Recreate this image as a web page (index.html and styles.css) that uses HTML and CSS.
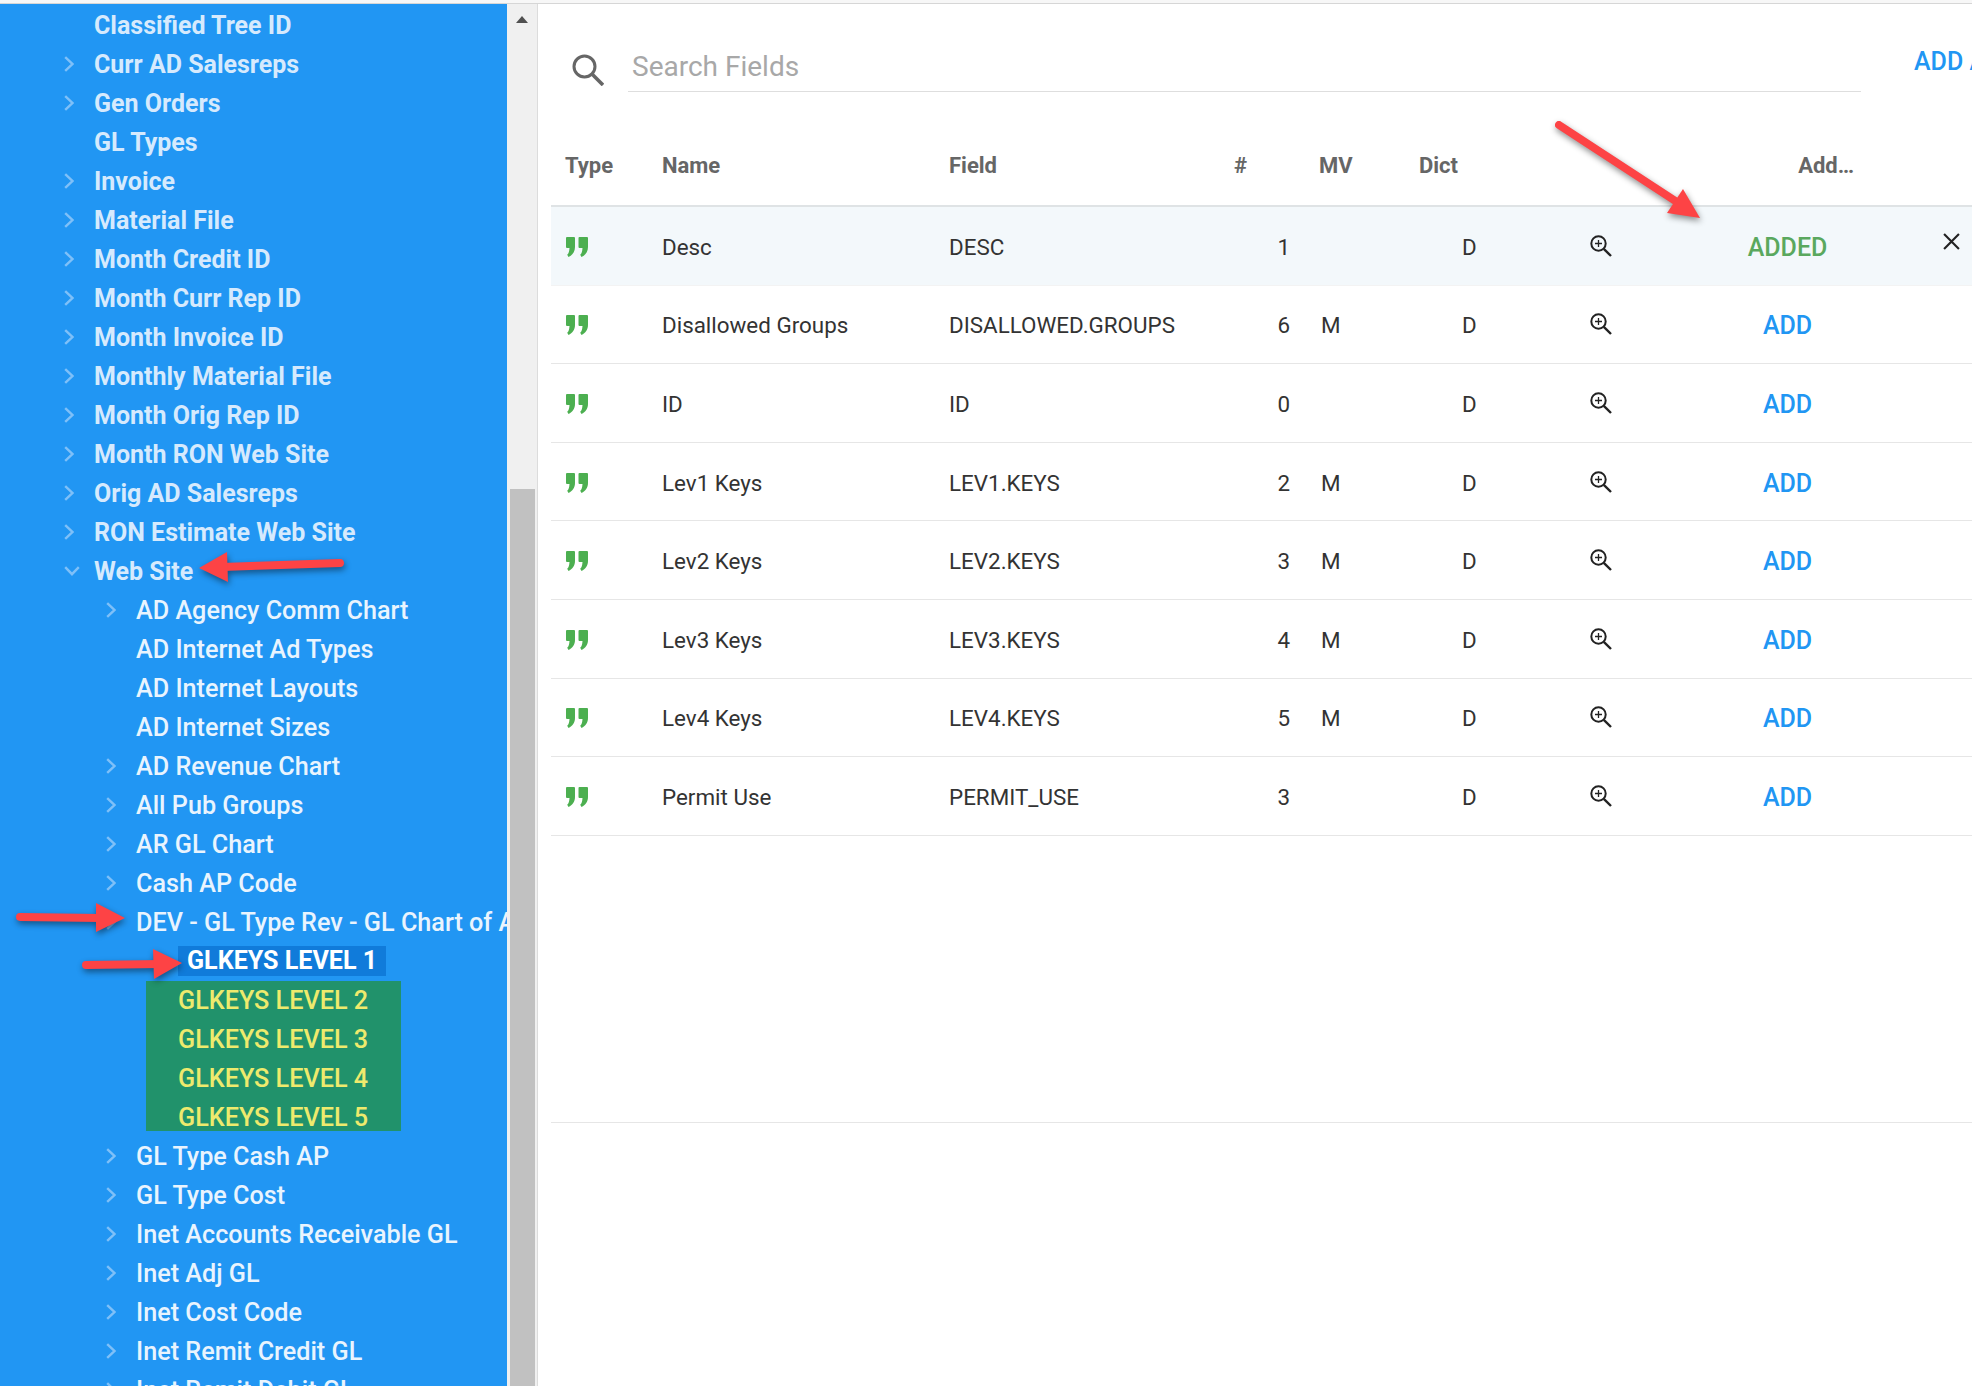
FILE: index.html
```html
<!DOCTYPE html>
<html lang="en">
<head>
    <meta charset="UTF-8">
    <title>Dictionary Fields</title>
    <link rel="stylesheet" href="styles.css">
</head>
<body>

<svg class="iconDefs" width="0" height="0">
    <symbol id="chevRight" viewBox="0 0 10 16"><path d="M1.2 1.2 8.400 8 1.2 14.800" fill="none" stroke="currentColor" stroke-width="2.400"/></symbol>
    <symbol id="chevDown" viewBox="0 0 16 10"><path d="M1.2 1.2 8 8.200 14.800 1.2" fill="none" stroke="currentColor" stroke-width="2.400"/></symbol>
    <symbol id="quote" viewBox="0 0 22 20"><path d="M1 0h7a1 1 0 0 1 1 1v9c0 4.500-2.500 8.300-6.500 10L1.200 17.800c1.500-1.300 2-3 2.300-6.800H1a1 1 0 0 1-1-1V1a1 1 0 0 1 1-1zM13.500 0h7.500a1 1 0 0 1 1 1v9c0 4.500-2.500 8.300-6.500 10l-1.300-2.200c1.500-1.300 2-3 2.300-6.800h-3a1 1 0 0 1-1-1V1a1 1 0 0 1 1-1z" fill="currentColor"/></symbol>
    <symbol id="zoomIn" viewBox="0 0 22 22"><circle cx="8.500" cy="8.500" r="7.200" fill="none" stroke="currentColor" stroke-width="2"/><path d="M13.800 13.800 21 21" fill="none" stroke="currentColor" stroke-width="2.400"/><path d="M8.500 5v7M5 8.500h7" fill="none" stroke="currentColor" stroke-width="1.300"/></symbol>
</svg>

<div class="topLine"></div>

<div class="page">
    <nav class="tree">
        <div class="treeRow"><span class="slot"></span>Classified Tree ID</div>
        <div class="treeRow"><span class="slot"><svg class="chev"><use href="#chevRight"/></svg></span>Curr AD Salesreps</div>
        <div class="treeRow"><span class="slot"><svg class="chev"><use href="#chevRight"/></svg></span>Gen Orders</div>
        <div class="treeRow"><span class="slot"></span>GL Types</div>
        <div class="treeRow"><span class="slot"><svg class="chev"><use href="#chevRight"/></svg></span>Invoice</div>
        <div class="treeRow"><span class="slot"><svg class="chev"><use href="#chevRight"/></svg></span>Material File</div>
        <div class="treeRow"><span class="slot"><svg class="chev"><use href="#chevRight"/></svg></span>Month Credit ID</div>
        <div class="treeRow"><span class="slot"><svg class="chev"><use href="#chevRight"/></svg></span>Month Curr Rep ID</div>
        <div class="treeRow"><span class="slot"><svg class="chev"><use href="#chevRight"/></svg></span>Month Invoice ID</div>
        <div class="treeRow"><span class="slot"><svg class="chev"><use href="#chevRight"/></svg></span>Monthly Material File</div>
        <div class="treeRow"><span class="slot"><svg class="chev"><use href="#chevRight"/></svg></span>Month Orig Rep ID</div>
        <div class="treeRow"><span class="slot"><svg class="chev"><use href="#chevRight"/></svg></span>Month RON Web Site</div>
        <div class="treeRow"><span class="slot"><svg class="chev"><use href="#chevRight"/></svg></span>Orig AD Salesreps</div>
        <div class="treeRow"><span class="slot"><svg class="chev"><use href="#chevRight"/></svg></span>RON Estimate Web Site</div>
        <div class="treeRow"><span class="slot"><svg class="chevOpen"><use href="#chevDown"/></svg></span>Web Site</div>

        <div class="treeRow nested"><span class="slot"><svg class="chev"><use href="#chevRight"/></svg></span>AD Agency Comm Chart</div>
        <div class="treeRow nested"><span class="slot"></span>AD Internet Ad Types</div>
        <div class="treeRow nested"><span class="slot"></span>AD Internet Layouts</div>
        <div class="treeRow nested"><span class="slot"></span>AD Internet Sizes</div>
        <div class="treeRow nested"><span class="slot"><svg class="chev"><use href="#chevRight"/></svg></span>AD Revenue Chart</div>
        <div class="treeRow nested"><span class="slot"><svg class="chev"><use href="#chevRight"/></svg></span>All Pub Groups</div>
        <div class="treeRow nested"><span class="slot"><svg class="chev"><use href="#chevRight"/></svg></span>AR GL Chart</div>
        <div class="treeRow nested"><span class="slot"><svg class="chev"><use href="#chevRight"/></svg></span>Cash AP Code</div>
        <div class="treeRow nested"><span class="slot"><svg class="chev"><use href="#chevRight"/></svg></span>DEV - GL Type Rev - GL Chart of Accounts</div>

        <div class="treeRow levelRow"><span class="levelActive">GLKEYS LEVEL 1</span></div>
        <div class="levelGroup">
            <div class="treeRow levelItem">GLKEYS LEVEL 2</div>
            <div class="treeRow levelItem">GLKEYS LEVEL 3</div>
            <div class="treeRow levelItem">GLKEYS LEVEL 4</div>
            <div class="treeRow levelItem">GLKEYS LEVEL 5</div>
        </div>

        <div class="treeRow nested"><span class="slot"><svg class="chev"><use href="#chevRight"/></svg></span>GL Type Cash AP</div>
        <div class="treeRow nested"><span class="slot"><svg class="chev"><use href="#chevRight"/></svg></span>GL Type Cost</div>
        <div class="treeRow nested"><span class="slot"><svg class="chev"><use href="#chevRight"/></svg></span>Inet Accounts Receivable GL</div>
        <div class="treeRow nested"><span class="slot"><svg class="chev"><use href="#chevRight"/></svg></span>Inet Adj GL</div>
        <div class="treeRow nested"><span class="slot"><svg class="chev"><use href="#chevRight"/></svg></span>Inet Cost Code</div>
        <div class="treeRow nested"><span class="slot"><svg class="chev"><use href="#chevRight"/></svg></span>Inet Remit Credit GL</div>
        <div class="treeRow nested"><span class="slot"><svg class="chev"><use href="#chevRight"/></svg></span>Inet Remit Debit GL</div>
    </nav>

    <div class="scrollbar">
        <div class="scrollArrow"></div>
        <div class="scrollThumb"></div>
    </div>

    <main class="main">
        <div class="searchRow">
            <svg class="searchIcon" viewBox="0 0 32 32"><circle cx="12.500" cy="12.500" r="10.500" fill="none" stroke="#666" stroke-width="3"/><path d="M20 20 31 31" fill="none" stroke="#666" stroke-width="3.600"/></svg>
            <div class="searchField">Search Fields</div>
            <a class="addAll">ADD ALL</a>
        </div>

        <div class="fieldRow headRow">
            <div class="headCell">Type</div>
            <div class="headCell">Name</div>
            <div class="headCell">Field</div>
            <div class="headCell numHead">#</div>
            <div class="headCell mvHead">MV</div>
            <div class="headCell dictHead">Dict</div>
            <div></div>
            <div class="headCell addHead">Add…</div>
            <div></div>
        </div>

        <div class="fieldRow selected">
            <svg class="quoteIcon"><use href="#quote"/></svg>
            <div>Desc</div>
            <div>DESC</div>
            <div class="numCell">1</div>
            <div class="mvCell"></div>
            <div class="dictCell">D</div>
            <svg class="zoomIcon"><use href="#zoomIn"/></svg>
            <div class="addCell added">ADDED</div>
            <svg class="closeIcon" viewBox="0 0 16 16"><path d="M1 1 15 15M15 1 1 15" fill="none" stroke="#222" stroke-width="2"/></svg>
        </div>
        <div class="fieldRow">
            <svg class="quoteIcon"><use href="#quote"/></svg>
            <div>Disallowed Groups</div>
            <div>DISALLOWED.GROUPS</div>
            <div class="numCell">6</div>
            <div class="mvCell">M</div>
            <div class="dictCell">D</div>
            <svg class="zoomIcon"><use href="#zoomIn"/></svg>
            <div class="addCell">ADD</div>
            <div></div>
        </div>
        <div class="fieldRow">
            <svg class="quoteIcon"><use href="#quote"/></svg>
            <div>ID</div>
            <div>ID</div>
            <div class="numCell">0</div>
            <div class="mvCell"></div>
            <div class="dictCell">D</div>
            <svg class="zoomIcon"><use href="#zoomIn"/></svg>
            <div class="addCell">ADD</div>
            <div></div>
        </div>
        <div class="fieldRow">
            <svg class="quoteIcon"><use href="#quote"/></svg>
            <div>Lev1 Keys</div>
            <div>LEV1.KEYS</div>
            <div class="numCell">2</div>
            <div class="mvCell">M</div>
            <div class="dictCell">D</div>
            <svg class="zoomIcon"><use href="#zoomIn"/></svg>
            <div class="addCell">ADD</div>
            <div></div>
        </div>
        <div class="fieldRow">
            <svg class="quoteIcon"><use href="#quote"/></svg>
            <div>Lev2 Keys</div>
            <div>LEV2.KEYS</div>
            <div class="numCell">3</div>
            <div class="mvCell">M</div>
            <div class="dictCell">D</div>
            <svg class="zoomIcon"><use href="#zoomIn"/></svg>
            <div class="addCell">ADD</div>
            <div></div>
        </div>
        <div class="fieldRow">
            <svg class="quoteIcon"><use href="#quote"/></svg>
            <div>Lev3 Keys</div>
            <div>LEV3.KEYS</div>
            <div class="numCell">4</div>
            <div class="mvCell">M</div>
            <div class="dictCell">D</div>
            <svg class="zoomIcon"><use href="#zoomIn"/></svg>
            <div class="addCell">ADD</div>
            <div></div>
        </div>
        <div class="fieldRow">
            <svg class="quoteIcon"><use href="#quote"/></svg>
            <div>Lev4 Keys</div>
            <div>LEV4.KEYS</div>
            <div class="numCell">5</div>
            <div class="mvCell">M</div>
            <div class="dictCell">D</div>
            <svg class="zoomIcon"><use href="#zoomIn"/></svg>
            <div class="addCell">ADD</div>
            <div></div>
        </div>
        <div class="fieldRow">
            <svg class="quoteIcon"><use href="#quote"/></svg>
            <div>Permit Use</div>
            <div>PERMIT_USE</div>
            <div class="numCell">3</div>
            <div class="mvCell"></div>
            <div class="dictCell">D</div>
            <svg class="zoomIcon"><use href="#zoomIn"/></svg>
            <div class="addCell">ADD</div>
            <div></div>
        </div>

        <div class="tableEnd"></div>
    </main>
</div>

<!-- red annotation arrows drawn on top of the screenshot -->
<svg class="arrows" viewBox="0 0 1972 1386">
    <g class="arrow">
        <path d="M1559 125 1680 204"/>
        <polygon points="1700,218 1683,189 1667,213"/>
    </g>
    <g class="arrow">
        <path d="M340 563 222 567"/>
        <polygon points="199,568 227,552 228,582"/>
    </g>
    <g class="arrow">
        <path d="M20 917 100 918"/>
        <polygon points="125,918 96,903 96,932"/>
    </g>
    <g class="arrow">
        <path d="M86 965 160 964"/>
        <polygon points="182,963 153,949 154,979"/>
    </g>
</svg>

</body>
</html>
```

FILE: styles.css
```css
html, body {
    margin: 0;
    padding: 0;
    height: 100%;
    overflow: hidden;
    background-color: #fff;
    font-family: Roboto, sans-serif;
}

.iconDefs {
    position: absolute;
}

.topLine {
    height: 3px;
    background-color: #f7f7f7;
    border-bottom: 1px solid #d6d6d6;
}

.page {
    display: flex;
    height: 1382px;
    overflow: hidden;
}

/* left tree */
.tree {
    flex: 0 0 507px;
    width: 507px;
    padding-top: 1.500px;
    overflow: hidden;
    background-color: #2196f3;
    box-sizing: border-box;
}

.treeRow {
    display: flex;
    align-items: center;
    height: 39px;
    padding-left: 60px;
    font-size: 25px;
    font-weight: 700;
    color: #d6eafd;
    white-space: nowrap;
}

.treeRow.nested {
    padding-left: 102px;
    font-size: 25.200px;
    font-weight: 500;
    color: #e9f4fe;
}

.slot {
    flex: 0 0 34px;
    display: flex;
    align-items: center;
}

.chev {
    width: 10px;
    height: 16px;
    margin-left: 4px;
    color: #7fc0f8;
}

.chevOpen {
    width: 16px;
    height: 10px;
    margin-left: 4px;
    color: #7fc0f8;
}

.levelRow {
    padding-left: 178px;
    font-size: 25.200px;
    font-weight: 500;
}

.levelActive {
    padding: 0 9px;
    line-height: 30px;
    background-color: #107bda;
    color: #fff;
    font-weight: 700;
    font-size: 25.100px;
}

.levelGroup {
    width: 255px;
    height: 150px;
    margin: 0 0 6px 146px;
    background-color: #21926b;
    overflow: hidden;
}

.levelItem {
    padding-left: 32px;
    font-size: 25.200px;
    font-weight: 500;
    color: #eeea6d;
}

/* scrollbar */
.scrollbar {
    flex: 0 0 30px;
    height: 100%;
    background-color: #f0f0f0;
    border-right: 1px solid #dcdcdc;
    display: flex;
    flex-direction: column;
    align-items: center;
}

.scrollArrow {
    width: 0;
    height: 0;
    margin-top: 12px;
    border-left: 6.500px solid transparent;
    border-right: 6.500px solid transparent;
    border-bottom: 7px solid #505050;
}

.scrollThumb {
    width: 25px;
    margin-top: 466px;
    flex: 1;
    background-color: #c1c1c1;
}

/* right side */
.main {
    flex: 1;
    min-width: 0;
    padding-left: 13px;
    overflow: hidden;
    color: #333;
}

.searchRow {
    display: flex;
    height: 88px;
    white-space: nowrap;
}

.searchIcon {
    flex: 0 0 32px;
    width: 32px;
    height: 32px;
    margin: 50px 24px 0 21px;
    align-self: flex-start;
}

.searchField {
    flex: 0 0 1229px;
    height: 87px;
    line-height: 125px;
    padding-left: 4px;
    border-bottom: 1px solid #dedede;
    font-size: 28px;
    color: #a8a8a8;
}

.addAll {
    margin-left: 53px;
    line-height: 115px;
    font-size: 25px;
    font-weight: 500;
    color: #2196f3;
}

.fieldRow {
    display: grid;
    grid-template-columns: 111px 287px 276px 85px 100px 130px 120px 255px 58px;
    align-items: center;
    height: 78.600px;
    padding-top: 2px;
    box-sizing: border-box;
    border-bottom: 1px solid #e6e6e6;
    font-size: 22.400px;
}

.headRow {
    height: 115px;
    padding-top: 33px;
    border-bottom: 2px solid #dfe3e5;
}

.headCell {
    font-size: 22px;
    font-weight: 700;
    color: #666;
}

.headCell:first-child {
    padding-left: 14px;
}

.numHead,
.mvHead,
.dictHead {
    padding-left: 9px;
}

.addHead {
    text-align: right;
    padding-right: 61px;
}

.selected {
    background-color: #f3f8fb;
    border-bottom-color: #f3f3f3;
}

.quoteIcon {
    width: 22px;
    height: 20px;
    margin-left: 15px;
    color: #4caf50;
}

.numCell {
    text-align: right;
    padding-right: 20px;
}

.mvCell {
    padding-left: 11px;
}

.dictCell {
    padding-left: 52px;
}

.zoomIcon {
    width: 22px;
    height: 22px;
    margin: 0 0 2px 50px;
    color: #222;
}

.addCell {
    padding-top: 1px;
    text-align: center;
    font-size: 25px;
    font-weight: 500;
    color: #2196f3;
}

.addCell.added {
    color: #5aa85e;
}

.closeIcon {
    width: 17px;
    height: 17px;
    margin: 0 0 11px 28px;
}

.tableEnd {
    height: 286px;
    border-bottom: 1px solid #e6e6e6;
}

/* annotations */
.arrows {
    position: absolute;
    top: 0;
    left: 0;
    width: 1972px;
    height: 1386px;
    pointer-events: none;
}

.arrow {
    filter: drop-shadow(1px 3px 3px rgba(0, 0, 0, 0.45));
}

.arrow path {
    fill: none;
    stroke: #fd4345;
    stroke-width: 8;
    stroke-linecap: round;
}

.arrow polygon {
    fill: #fd4345;
}
```
